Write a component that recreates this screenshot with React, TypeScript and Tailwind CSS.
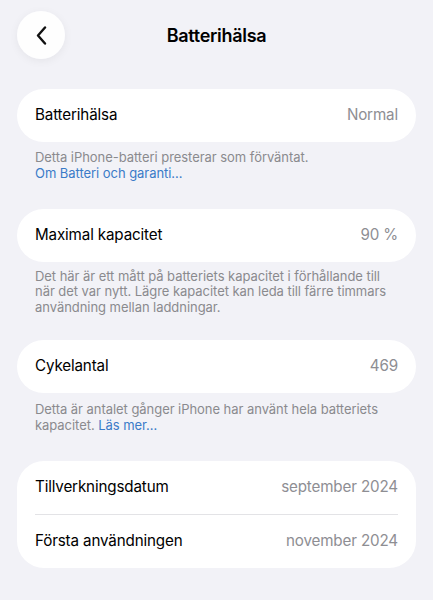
import React from 'react';

const font = { fontFamily: 'Inter, "Noto Sans", sans-serif' };

function Row({ label, value }: { label: string; value: string }) {
  return (
    <div className="h-[53px] flex items-center justify-between px-[18px]">
      <span className="text-[15.2px] text-black tracking-[-0.15px]">{label}</span>
      <span className="text-[15.2px] text-[#8e8e93] tracking-[-0.15px]">{value}</span>
    </div>
  );
}

function Footer({ children, className = '' }: { children: React.ReactNode; className?: string }) {
  return (
    <p className={`px-[18px] text-[13px] leading-[15.8px] text-[#8a8a8e] tracking-[-0.05px] ${className}`}>
      {children}
    </p>
  );
}

export default function App() {
  return (
    <div className="w-[433px] h-[600px] bg-[#f2f2f7] overflow-hidden px-[17px]" style={font}>
      {/* Header */}
      <div className="relative pt-[11px] h-[59px] flex items-center">
        <button className="w-[48px] h-[48px] rounded-full bg-white/90 shadow-[0_2px_10px_rgba(0,0,0,0.06)] flex items-center justify-center">
          <svg width="11" height="19" viewBox="0 0 11 19" fill="none">
            <path d="M9 1.5L2 9.5L9 17.5" stroke="#111" strokeWidth="2.4" strokeLinecap="round" strokeLinejoin="round" />
          </svg>
        </button>
        <div className="absolute left-0 right-0 top-[11px] h-[48px] flex items-center justify-center pointer-events-none">
          <span className="text-[18px] font-semibold text-black tracking-[-0.3px]">Batterihälsa</span>
        </div>
      </div>

      {/* Batterihälsa */}
      <div className="mt-[30px] bg-white rounded-[27px]">
        <Row label="Batterihälsa" value="Normal" />
      </div>
      <Footer className="mt-[8px]">
        Detta iPhone-batteri presterar som förväntat.
        <br />
        <span className="text-[#3a7bc8]">Om Batteri och garanti…</span>
      </Footer>

      {/* Maximal kapacitet */}
      <div className="mt-[27px] bg-white rounded-[27px]">
        <Row label="Maximal kapacitet" value="90 %" />
      </div>
      <Footer className="mt-[7px]">
        Det här är ett mått på batteriets kapacitet i förhållande till när det var nytt. Lägre kapacitet kan leda till färre timmars användning mellan laddningar.
      </Footer>

      {/* Cykelantal */}
      <div className="mt-[24px] bg-white rounded-[27px]">
        <Row label="Cykelantal" value="469" />
      </div>
      <Footer className="mt-[9px]">
        Detta är antalet gånger iPhone har använt hela batteriets kapacitet.{' '}
        <span className="text-[#3a7bc8]">Läs mer…</span>
      </Footer>

      {/* Datum */}
      <div className="mt-[27px] bg-white rounded-[27px]">
        <Row label="Tillverkningsdatum" value="september 2024" />
        <div className="mx-[18px] h-px bg-[#e3e3e6]" />
        <Row label="Första användningen" value="november 2024" />
      </div>
    </div>
  );
}
